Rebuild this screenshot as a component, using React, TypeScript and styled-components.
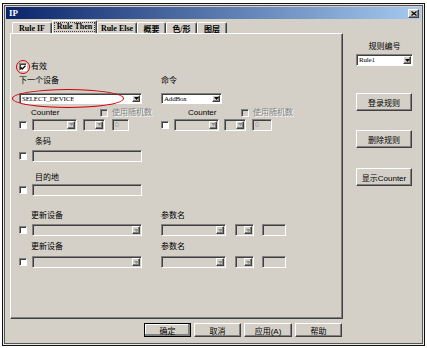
import styled, { createGlobalStyle, css } from "styled-components";

const face = "#d4d0c8";

const GlobalStyle = createGlobalStyle`
  html, body { margin: 0; padding: 0; background: #fff; }
  body {
    font-family: "Liberation Sans", "Noto Sans CJK SC", sans-serif;
    font-size: 8px;
    color: #000;
  }
  * { box-sizing: border-box; }
`;

const sunken = css`
  border-top: 1px solid #808080;
  border-left: 1px solid #808080;
  border-right: 1px solid #fff;
  border-bottom: 1px solid #fff;
  box-shadow: inset 1px 1px 0 #404040;
`;

const raised = css`
  border-top: 1px solid #fff;
  border-left: 1px solid #fff;
  border-right: 1px solid #404040;
  border-bottom: 1px solid #404040;
  box-shadow: inset -1px -1px 0 #808080;
`;

const Window = styled.div`
  margin: 3px 0 0 2px;
  width: 423px;
  height: 343px;
  background: ${face};
  border: 1px solid #111;
  box-shadow: inset 0 0 0 1px #eceae4, inset 0 0 0 2px #555;
  padding: 3px;
  display: flex;
  flex-direction: column;
`;

const TitleBar = styled.div`
  height: 12px;
  background: linear-gradient(to right, #0a246a, #a6caf0);
  display: flex;
  align-items: center;
  justify-content: space-between;
  padding: 0 2px 0 3px;
  color: #fff;
  font-weight: bold;
  font-size: 9px;
  font-family: "Liberation Serif", serif;
`;

const CloseBtn = styled.span`
  width: 11px;
  height: 9px;
  background: ${face};
  ${raised};
  display: flex;
  align-items: center;
  justify-content: center;
`;

const Content = styled.div`
  display: flex;
  padding-left: 4px;
  flex: 1;
`;

const LeftCol = styled.div`
  width: 333px;
  display: flex;
  flex-direction: column;
`;

const TabStrip = styled.div`
  height: 14px;
  display: flex;
  align-items: flex-end;
  padding-left: 2px;
`;

const Tab = styled.div<{ $w: number; $active?: boolean }>`
  width: ${(p) => p.$w}px;
  height: ${(p) => (p.$active ? 13 : 11)}px;
  border-top: 1px solid #fff;
  border-left: 1px solid #fff;
  border-right: 1px solid #404040;
  box-shadow: inset -1px 0 0 #808080;
  border-radius: 2px 2px 0 0;
  display: flex;
  align-items: center;
  justify-content: center;
  font-size: 8px;
  font-family: "Liberation Serif", "Noto Sans CJK SC", serif;
  font-weight: bold;
  white-space: nowrap;
`;

const FocusText = styled.span`
  border: 1px dotted #444;
  padding: 0 2px;
  line-height: 8px;
`;

const Panel = styled.div`
  height: 286px;
  border-top: 1px solid #fff;
  border-left: 1px solid #fff;
  border-right: 1px solid #404040;
  border-bottom: 1px solid #404040;
  box-shadow: inset -1px -1px 0 #808080;
  padding-left: 8px;
  display: flex;
  flex-direction: column;
`;

const Row = styled.div<{ $mt: number; $h: number }>`
  display: flex;
  align-items: center;
  margin-top: ${(p) => p.$mt}px;
  height: ${(p) => p.$h}px;
`;

const Half = styled.div<{ $w?: number }>`
  display: flex;
  align-items: center;
  height: 100%;
  width: ${(p) => (p.$w ? `${p.$w}px` : "auto")};
  flex-shrink: 0;
`;

const Text = styled.span<{ $ml?: number; $w?: number; $dis?: boolean }>`
  margin-left: ${(p) => p.$ml ?? 0}px;
  width: ${(p) => (p.$w ? `${p.$w}px` : "auto")};
  flex-shrink: 0;
  white-space: nowrap;
  line-height: 10px;
  color: ${(p) => (p.$dis ? "#808080" : "#000")};
  text-shadow: ${(p) => (p.$dis ? "1px 1px 0 #fff" : "none")};
`;

const Check = styled.span<{ $dis?: boolean }>`
  position: relative;
  width: 8px;
  height: 8px;
  flex-shrink: 0;
  background: ${(p) => (p.$dis ? face : "#fff")};
  ${sunken};
  display: flex;
  align-items: center;
  justify-content: center;
`;

const Ring = styled.span`
  position: absolute;
  left: -4px;
  top: -4px;
  width: 14px;
  height: 14px;
  border: 1.5px solid #d40000;
  border-radius: 50%;
`;

const SelectWrap = styled.span<{ $ml?: number }>`
  position: relative;
  margin-left: ${(p) => p.$ml ?? 0}px;
  flex-shrink: 0;
  display: flex;
`;

const Ellipse = styled.span`
  position: absolute;
  left: -7px;
  top: -4px;
  width: 112px;
  height: 19px;
  border: 1.5px solid #d40000;
  border-radius: 50%;
`;

const SelectBox = styled.div<{ $w: number; $h?: number; $dis?: boolean }>`
  width: ${(p) => p.$w}px;
  height: ${(p) => p.$h ?? 12}px;
  background: ${(p) => (p.$dis ? face : "#fff")};
  ${sunken};
  display: flex;
  align-items: stretch;
  justify-content: space-between;
  padding: 1px 1px 1px 2px;
  font-size: 7px;
  line-height: 8px;
  font-family: "Liberation Serif", "Noto Sans CJK SC", serif;
`;

const Value = styled.span`
  white-space: nowrap;
  overflow: hidden;
  letter-spacing: -0.2px;
`;

const ArrowBtn = styled.span`
  width: 8px;
  flex-shrink: 0;
  background: ${face};
  ${raised};
  display: flex;
  align-items: center;
  justify-content: center;
`;

const TextBox = styled.div<{ $w: number; $ml?: number }>`
  width: ${(p) => p.$w}px;
  height: 12px;
  margin-left: ${(p) => p.$ml ?? 0}px;
  flex-shrink: 0;
  background: ${face};
  ${sunken};
  font-size: 7px;
  line-height: 9px;
  padding-left: 2px;
  color: #a0a0a0;
`;

const Footer = styled.div`
  display: flex;
  justify-content: flex-end;
  gap: 3px;
  margin-top: 4px;
  padding-right: 1px;
`;

const Button = styled.div<{ $w: number; $h: number; $default?: boolean }>`
  width: ${(p) => p.$w}px;
  height: ${(p) => p.$h}px;
  background: ${face};
  ${raised};
  ${(p) =>
    p.$default &&
    css`
      outline: 1px solid #000;
      outline-offset: -1px;
      box-shadow: inset -2px -2px 0 #808080, inset 1px 1px 0 #fff;
    `}
  display: flex;
  align-items: center;
  justify-content: center;
  font-size: 8px;
  white-space: nowrap;
`;

const RightCol = styled.div`
  flex: 1;
  padding-left: 13px;
  display: flex;
  flex-direction: column;
`;

const RuleLabel = styled.div`
  width: 57px;
  margin-top: 23px;
  text-align: center;
  line-height: 10px;
`;

const SideGroup = styled.div<{ $mt: number }>`
  margin-top: ${(p) => p.$mt}px;
`;

const Arrow = ({ dis }: { dis?: boolean }) => (
  <svg width="5" height="3" viewBox="0 0 5 3">
    <path d="M0 0h5L2.5 3z" fill={dis ? "#909090" : "#000"} />
  </svg>
);

const Select = ({
  w,
  h,
  dis,
  value,
}: {
  w: number;
  h?: number;
  dis?: boolean;
  value?: string;
}) => (
  <SelectBox $w={w} $h={h} $dis={dis}>
    <Value>{value}</Value>
    <ArrowBtn>
      <Arrow dis={dis} />
    </ArrowBtn>
  </SelectBox>
);

const tabs = [
  { label: "Rule  IF", w: 40 },
  { label: "Rule Then", w: 45, active: true },
  { label: "Rule Else", w: 40 },
  { label: "概要", w: 29 },
  { label: "色/形", w: 31 },
  { label: "图层", w: 30 },
];

const UpdateRow = ({ mt }: { mt: number }) => (
  <>
    <Row $mt={mt} $h={10}>
      <Half $w={142}>
        <Text $ml={12}>更新设备</Text>
      </Half>
      <Half>
        <Text>参数名</Text>
      </Half>
    </Row>
    <Row $mt={mt === 15 ? 3 : 4} $h={12}>
      <Half $w={142}>
        <Check />
        <SelectWrap $ml={5}>
          <Select w={110} dis />
        </SelectWrap>
      </Half>
      <Half>
        <Select w={65} dis />
        <SelectWrap $ml={9}>
          <Select w={19} dis />
        </SelectWrap>
        <TextBox $w={24} $ml={8} />
      </Half>
    </Row>
  </>
);

export default function App() {
  return (
    <>
      <GlobalStyle />
      <Window>
        <TitleBar>
          <span>IP</span>
          <CloseBtn>
            <svg width="6" height="5" viewBox="0 0 6 5">
              <path d="M0.5 0.5l5 4M5.5 0.5l-5 4" stroke="#000" strokeWidth="1.2" />
            </svg>
          </CloseBtn>
        </TitleBar>
        <Content>
          <LeftCol>
            <TabStrip>
              {tabs.map((t) => (
                <Tab key={t.label} $w={t.w} $active={t.active}>
                  {t.active ? <FocusText>{t.label}</FocusText> : t.label}
                </Tab>
              ))}
            </TabStrip>
            <Panel>
              <Row $mt={27} $h={12}>
                <Check>
                  <svg width="6" height="5" viewBox="0 0 6 5">
                    <path d="M0.5 2.2l1.8 1.8L5.5 0.6" stroke="#000" strokeWidth="1.3" fill="none" />
                  </svg>
                  <Ring />
                </Check>
                <Text $ml={4}>有效</Text>
              </Row>
              <Row $mt={2} $h={11}>
                <Half $w={142}>
                  <Text>下一个设备</Text>
                </Half>
                <Half>
                  <Text>命令</Text>
                </Half>
              </Row>
              <Row $mt={7} $h={11}>
                <Half $w={142}>
                  <SelectWrap>
                    <Select w={123} h={11} value="SELECT_DEVICE" />
                    <Ellipse />
                  </SelectWrap>
                </Half>
                <Half>
                  <Select w={61} h={11} value="AddBox" />
                </Half>
              </Row>
              <Row $mt={4} $h={10}>
                <Half $w={142}>
                  <Text $ml={12} $w={69}>
                    Counter
                  </Text>
                  <Check $dis />
                  <Text $ml={4} $dis>
                    使用随机数
                  </Text>
                </Half>
                <Half>
                  <Text $ml={27} $w={53}>
                    Counter
                  </Text>
                  <Check $dis />
                  <Text $ml={4} $dis>
                    使用随机数
                  </Text>
                </Half>
              </Row>
              <Row $mt={0} $h={13}>
                <Half $w={142}>
                  <Check />
                  <SelectWrap $ml={5}>
                    <Select w={45} dis />
                  </SelectWrap>
                  <SelectWrap $ml={6}>
                    <Select w={22} dis />
                  </SelectWrap>
                  <TextBox $w={17} $ml={7}>
                    0
                  </TextBox>
                </Half>
                <Half>
                  <Check />
                  <SelectWrap $ml={5}>
                    <Select w={45} dis />
                  </SelectWrap>
                  <SelectWrap $ml={5}>
                    <Select w={22} dis />
                  </SelectWrap>
                  <TextBox $w={20} $ml={6}>
                    0
                  </TextBox>
                </Half>
              </Row>
              <Row $mt={6} $h={10}>
                <Text $ml={16}>条码</Text>
              </Row>
              <Row $mt={3} $h={12}>
                <Check />
                <TextBox $w={110} $ml={5} />
              </Row>
              <Row $mt={11} $h={10}>
                <Text $ml={16}>目的地</Text>
              </Row>
              <Row $mt={1} $h={12}>
                <Check />
                <TextBox $w={110} $ml={5} />
              </Row>
              <UpdateRow mt={15} />
              <UpdateRow mt={6} />
            </Panel>
            <Footer>
              <Button $w={47} $h={14} $default>
                确定
              </Button>
              <Button $w={47} $h={14}>
                取消
              </Button>
              <Button $w={48} $h={14}>
                应用(A)
              </Button>
              <Button $w={47} $h={14}>
                帮助
              </Button>
            </Footer>
          </LeftCol>
          <RightCol>
            <RuleLabel>规则编号</RuleLabel>
            <SideGroup $mt={2}>
              <Select w={57} value="Rule1" />
            </SideGroup>
            <SideGroup $mt={27}>
              <Button $w={56} $h={18}>
                登录规则
              </Button>
            </SideGroup>
            <SideGroup $mt={19}>
              <Button $w={56} $h={18}>
                删除规则
              </Button>
            </SideGroup>
            <SideGroup $mt={20}>
              <Button $w={56} $h={18}>
                显示Counter
              </Button>
            </SideGroup>
          </RightCol>
        </Content>
      </Window>
    </>
  );
}
